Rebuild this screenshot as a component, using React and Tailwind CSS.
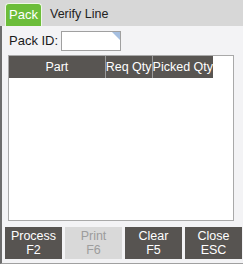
import React from "react";

export default function App() {
  const buttons = [
    { top: "Process", key: "F2" },
    { top: "Print", key: "F6", disabled: true },
    { top: "Clear", key: "F5" },
    { top: "Close", key: "ESC" },
  ];

  return (
    <div
      className="w-[243px] h-[264px] bg-[#f3f3f5] flex flex-col overflow-hidden text-[12px] text-[#1a1a1a]"
      style={{ fontFamily: '"Liberation Sans", Arial, sans-serif' }}
    >
      {/* Tabs */}
      <div className="h-[26px] bg-[#d7d7d7] flex items-end pl-[5px] shrink-0">
        <div className="w-[37px] h-[23px] rounded-t-[4px] bg-[#6cbd3a] border border-[#eef8e6] border-b-0 flex items-center justify-center text-white text-[13px]">
          Pack
        </div>
        <div className="ml-[8px] h-[23px] flex items-center text-[12.5px] text-[#222]">Verify Line</div>
      </div>

      {/* Content */}
      <div className="flex-1 flex flex-col border-l-2 border-[#6d6d6d] border-b border-b-[#a0a0a0] pl-[3px] pr-[1px] pt-[5px] pb-[3px]">
        <div className="flex items-center h-[20px] ml-[4px]">
          <span className="text-[13px] w-[52px]">Pack ID:</span>
          <div className="relative w-[60px] h-[20px] bg-white border border-[#a0a0a0]">
            <div className="absolute top-0 right-0 w-0 h-0 border-t-[8px] border-t-[#a6bfe0] border-l-[8px] border-l-transparent" />
          </div>
        </div>

        <div className="mt-[4px] ml-[3px] mr-[8px] h-[166px] bg-white border border-[#a9a9a9] flex flex-col">
          <div className="flex h-[22px] text-white text-[12.5px] w-[204px]">
            <div className="w-[97px] bg-[#585552] flex items-center justify-center border-r border-[#9a9a9a]">Part</div>
            <div className="w-[47px] bg-[#585552] flex items-center justify-center border-r border-[#9a9a9a] whitespace-nowrap">Req Qty</div>
            <div className="flex-1 bg-[#585552] flex items-center justify-center whitespace-nowrap">Picked Qty</div>
          </div>
        </div>

        <div className="mt-[6px] flex gap-[3px] h-[32px]">
          {buttons.map((b) => (
            <div
              key={b.top}
              className={`flex-1 flex flex-col items-center justify-center leading-[14px] text-[12.5px] ${
                b.disabled ? "bg-[#d9d9d9] text-[#9c9c9c]" : "bg-[#575451] text-white"
              }`}
            >
              <span>{b.top}</span>
              <span>{b.key}</span>
            </div>
          ))}
        </div>
      </div>
    </div>
  );
}
